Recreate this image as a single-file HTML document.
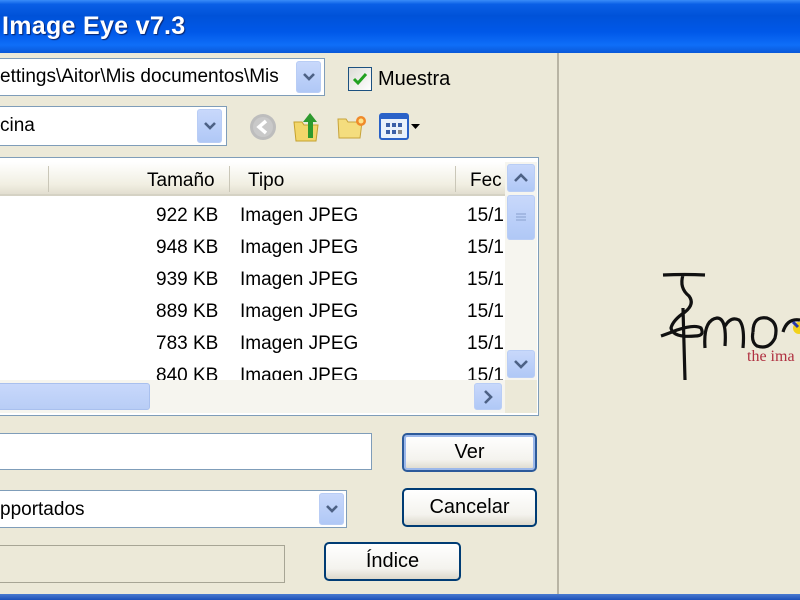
<!DOCTYPE html>
<html><head><meta charset="utf-8"><style>
*{box-sizing:border-box;margin:0;padding:0}
body{width:800px;height:600px;overflow:hidden;background:#ECE9D8;position:relative;font-family:"Liberation Sans","DejaVu Sans",sans-serif;font-size:19px;color:#000}
.a{position:absolute}
.title{left:0;top:0;width:800px;height:53px;background:linear-gradient(#3a8cf8 0,#0a5fe6 8%,#0052d8 30%,#0058e8 60%,#0f6ef8 85%,#0a58d8 100%)}
.tt{left:2px;top:12px;color:#fff;font-weight:bold;font-size:25px;text-shadow:1px 1px 1px #0a246a;letter-spacing:.3px}
.field{background:#fff;border:1px solid #7f9db9}
.dd{width:25px;border-radius:3px;background:linear-gradient(#c8d8fb,#b0c8f6);border:1px solid #b9cdf5}
.dd svg{position:absolute;left:5px;top:50%;margin-top:-5px}
.btn{border:2px solid #003c74;border-radius:5px;background:linear-gradient(#fff,#f4f3ee 70%,#dcd8cb);text-align:center;font-size:20px}
.row{left:0;width:505px;height:32px}
.row span{position:absolute;top:7px}
</style></head><body>
<div class="a title"></div>
<div class="a tt">Image Eye v7.3</div>
<div class="a" style="left:557px;top:53px;width:2px;height:543px;background:#b8b4a4"></div>
<div class="a" style="left:0;top:594px;width:800px;height:6px;background:linear-gradient(#4a7ad0,#1d50b8)"></div>

<div class="a field" style="left:-2px;top:58px;width:327px;height:38px"></div>
<div class="a" style="left:0;top:66px;font-size:19px;white-space:nowrap;width:293px;overflow:hidden">ettings\Aitor\Mis documentos\Mis</div>
<div class="a dd" style="left:296px;top:61px;height:32px"><svg width="14" height="10"><path d="M2 2 L7 7 L12 2" stroke="#4d6185" stroke-width="2.6" fill="none"/></svg></div>
<div class="a" style="left:348px;top:67px;width:24px;height:24px;border:1px solid #1c5180;background:linear-gradient(135deg,#dcdcd6,#fff)"><svg width="22" height="22" style="position:absolute;left:0;top:0"><path d="M5 11 L9 15 L17 6" stroke="#21a121" stroke-width="3" fill="none"/></svg></div>
<div class="a" style="left:378px;top:68px;font-size:20px">Muestra</div>

<div class="a field" style="left:-2px;top:106px;width:229px;height:40px"></div>
<div class="a" style="left:0;top:115px">cina</div>
<div class="a dd" style="left:197px;top:109px;height:34px"><svg width="14" height="10"><path d="M2 2 L7 7 L12 2" stroke="#4d6185" stroke-width="2.6" fill="none"/></svg></div>
<svg class="a" style="left:248px;top:112px" width="30" height="30"><circle cx="15" cy="15" r="13" fill="#bdbdbd"/><circle cx="15" cy="15" r="10" fill="#c9c9c9"/><path d="M18 9 L11 15 L18 21" stroke="#fff" stroke-width="3.5" fill="none"/></svg>
<svg class="a" style="left:292px;top:110px" width="30" height="33"><path d="M2 12 L10 12 L12 15 L26 15 L24 31 L4 31 Z" fill="#f2d66a" stroke="#c5a12e"/><path d="M16 28 L16 12 L11 12 L18 3 L25 12 L21 12 L21 28 Z" fill="#2e9a2e"/></svg>
<svg class="a" style="left:336px;top:113px" width="32" height="28"><path d="M2 6 L10 6 L12 9 L26 9 L24 25 L3 25 Z" fill="#f4dd7e" stroke="#c7a33a"/><circle cx="25" cy="8" r="5" fill="#f08a2a"/><circle cx="25" cy="8" r="2.5" fill="#fde38a"/></svg>
<svg class="a" style="left:379px;top:113px" width="46" height="28"><rect x="1" y="1" width="28" height="25" rx="2" fill="#e9f1fb" stroke="#2a62c8" stroke-width="2"/><rect x="1" y="1" width="28" height="5" fill="#2a62c8"/><g fill="#3a5fa8"><rect x="7" y="10" width="4" height="4"/><rect x="13" y="10" width="4" height="4"/><rect x="19" y="10" width="4" height="4"/><rect x="7" y="17" width="4" height="4"/><rect x="13" y="17" width="4" height="4"/><rect x="19" y="17" width="4" height="4" fill="#888"/></g><path d="M32 11 L41 11 L36.5 16 Z" fill="#000"/></svg>

<div class="a" style="left:-2px;top:157px;width:541px;height:259px;border:1px solid #7f9db9;background:#fff"></div>
<div class="a" style="left:0;top:162px;width:505px;height:34px;background:linear-gradient(#fff,#f1efe2 70%,#e2ded0);border-bottom:2px solid #d5d2c4"></div>
<div class="a" style="left:48px;top:166px;width:1px;height:26px;background:#cac7b8"></div>
<div class="a" style="left:229px;top:166px;width:1px;height:26px;background:#cac7b8"></div>
<div class="a" style="left:455px;top:166px;width:1px;height:26px;background:#cac7b8"></div>
<div class="a" style="left:147px;top:170px">Tamaño</div>
<div class="a" style="left:248px;top:170px">Tipo</div>
<div class="a" style="left:470px;top:170px">Fec</div>
<div class="a" style="left:0;top:198px;width:505px;height:182px;overflow:hidden">
<div class="a row" style="top:0"><span style="left:156px">922 KB</span><span style="left:240px">Imagen JPEG</span><span style="left:467px">15/1</span></div>
<div class="a row" style="top:32px"><span style="left:156px">948 KB</span><span style="left:240px">Imagen JPEG</span><span style="left:467px">15/1</span></div>
<div class="a row" style="top:64px"><span style="left:156px">939 KB</span><span style="left:240px">Imagen JPEG</span><span style="left:467px">15/1</span></div>
<div class="a row" style="top:96px"><span style="left:156px">889 KB</span><span style="left:240px">Imagen JPEG</span><span style="left:467px">15/1</span></div>
<div class="a row" style="top:128px"><span style="left:156px">783 KB</span><span style="left:240px">Imagen JPEG</span><span style="left:467px">15/1</span></div>
<div class="a row" style="top:160px"><span style="left:156px">840 KB</span><span style="left:240px">Imagen JPEG</span><span style="left:467px">15/1</span></div>
</div>
<div class="a" style="left:505px;top:162px;width:32px;height:218px;background:#f6f5ef"></div>
<div class="a dd" style="left:507px;top:164px;width:28px;height:28px"><svg width="16" height="10" style="left:5px"><path d="M2 8 L8 2 L14 8" stroke="#4d6185" stroke-width="2.6" fill="none"/></svg></div>
<div class="a dd" style="left:507px;top:195px;width:28px;height:45px"><svg width="16" height="10" style="left:6px"><path d="M2 1h10M2 4h10M2 7h10" stroke="#9ab0dc" stroke-width="1.5"/></svg></div>
<div class="a dd" style="left:507px;top:350px;width:28px;height:28px"><svg width="16" height="10" style="left:5px"><path d="M2 2 L8 8 L14 2" stroke="#4d6185" stroke-width="2.6" fill="none"/></svg></div>
<div class="a" style="left:0;top:380px;width:505px;height:33px;background:#f6f5ef"></div>
<div class="a" style="left:-4px;top:383px;width:154px;height:27px;border-radius:3px;background:linear-gradient(#c8d8fb,#b8cdf6);border:1px solid #a9c0ee"></div>
<div class="a dd" style="left:474px;top:383px;width:28px;height:27px"><svg width="12" height="16" style="left:8px;margin-top:-8px"><path d="M2 2 L8 8 L2 14" stroke="#4d6185" stroke-width="2.6" fill="none"/></svg></div>
<div class="a" style="left:505px;top:380px;width:32px;height:33px;background:#ECE9D8"></div>

<div class="a field" style="left:-2px;top:433px;width:374px;height:37px"></div>
<div class="a btn" style="left:402px;top:433px;width:135px;height:39px;line-height:35px;border-color:#2c5a9a;box-shadow:inset 0 0 0 2px #9cb8ea">Ver</div>
<div class="a field" style="left:-2px;top:490px;width:349px;height:38px"></div>
<div class="a" style="left:0;top:499px">pportados</div>
<div class="a dd" style="left:319px;top:493px;height:32px"><svg width="14" height="10"><path d="M2 2 L7 7 L12 2" stroke="#4d6185" stroke-width="2.6" fill="none"/></svg></div>
<div class="a btn" style="left:402px;top:488px;width:135px;height:39px;line-height:35px">Cancelar</div>
<div class="a" style="left:-2px;top:545px;width:287px;height:38px;border:1px solid #a7a595;background:#ECE9D8"></div>
<div class="a btn" style="left:324px;top:542px;width:137px;height:39px;line-height:35px">Índice</div>

<svg class="a" style="left:655px;top:268px" width="145" height="118">
<path d="M8 7 Q30 6 50 7 M28 7 Q24 20 34 28 Q40 36 30 44 Q18 52 16 60 Q18 70 40 68 Q50 68 46 60 Q40 56 22 62 Q12 66 6 68 M28 40 L30 112" stroke="#111" stroke-width="3.2" fill="none"/>
<path d="M50 80 Q48 52 62 50 Q72 50 70 78 M70 58 Q76 48 84 52 Q90 58 88 80 M98 64 Q98 48 112 50 Q124 54 120 70 Q114 82 102 78 Q96 74 98 64 M128 64 Q132 50 145 52" stroke="#111" stroke-width="3.2" fill="none"/>
<circle cx="144" cy="60" r="6" fill="#f2d21a"/><path d="M138 54 L143 59" stroke="#2a3aa8" stroke-width="3"/>
<text x="92" y="93" font-family="Liberation Serif,serif" font-size="16" fill="#b03040">the ima</text>
</svg>
</body></html>
